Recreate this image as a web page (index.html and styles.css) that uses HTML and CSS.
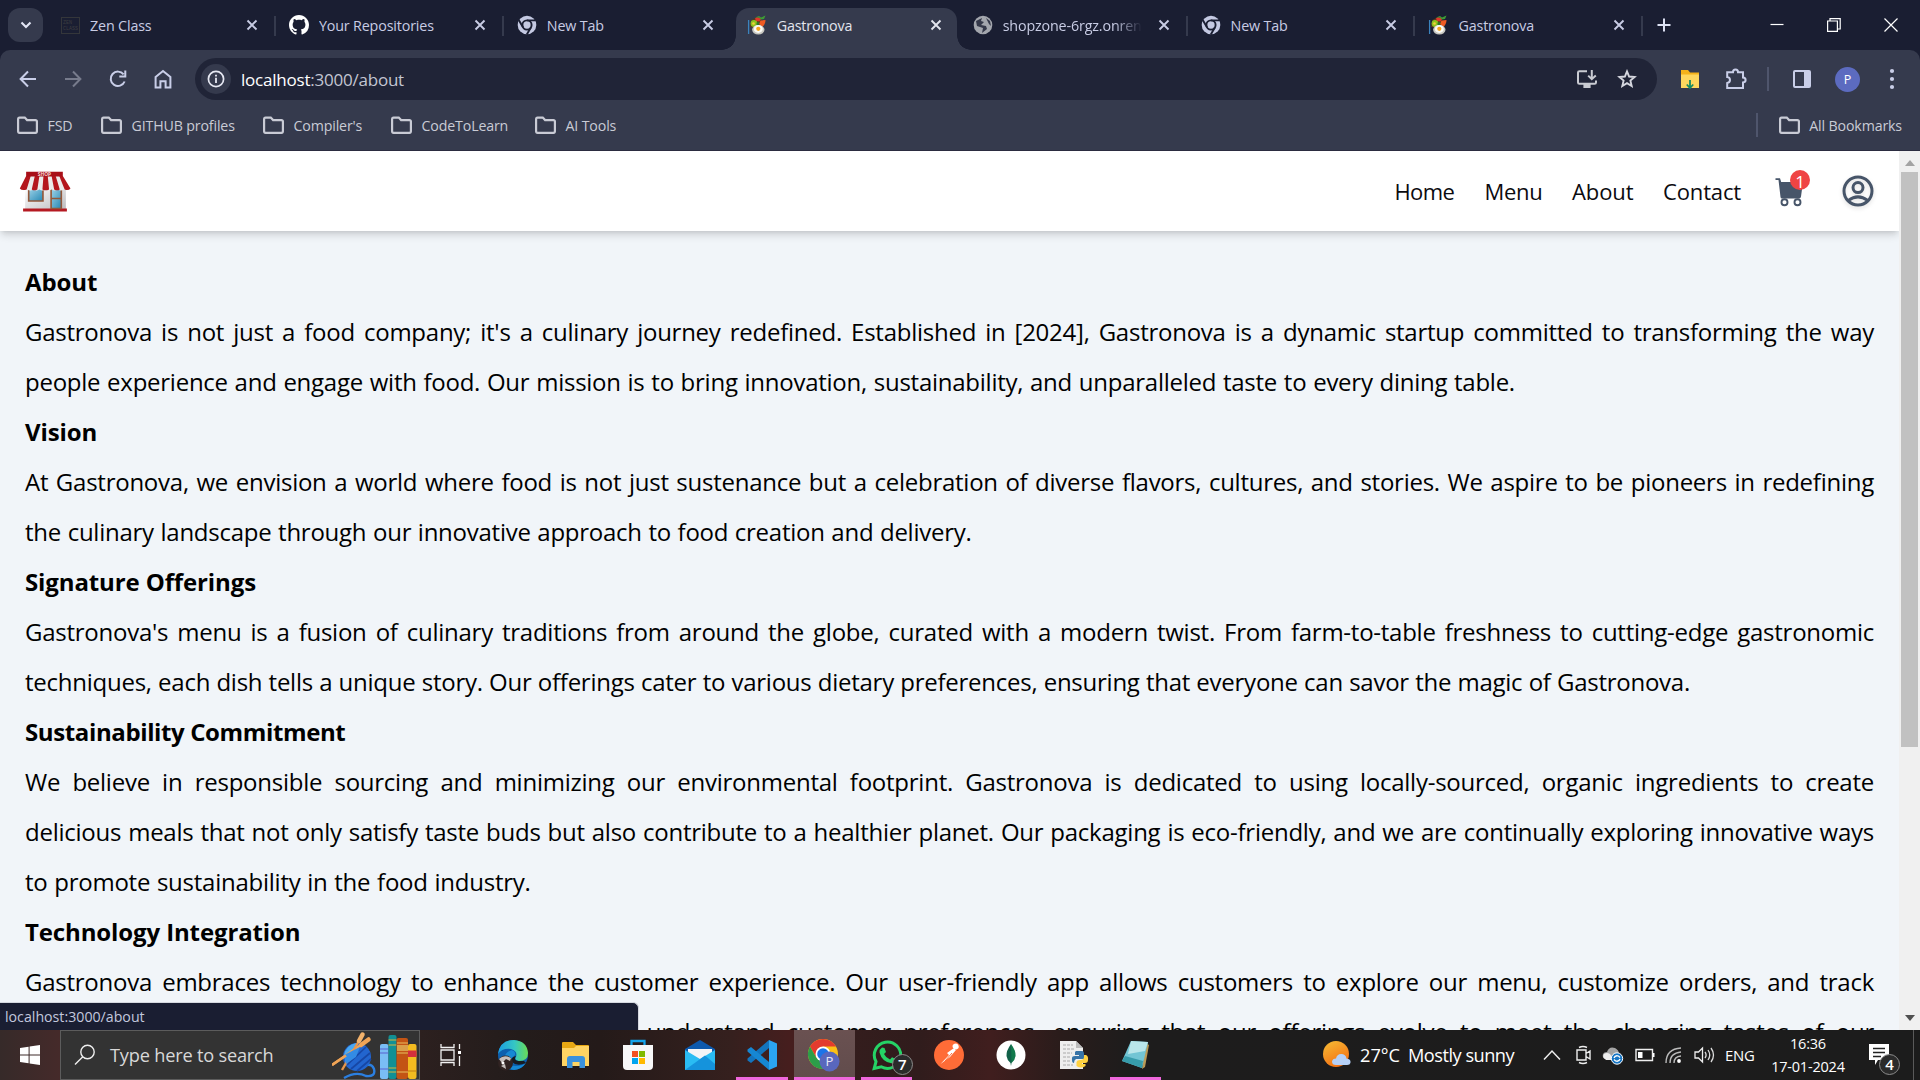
FILE: index.html
```html
<!DOCTYPE html>
<html lang="en">
<head>
<meta charset="utf-8">
<title>Gastronova</title>
<link rel="stylesheet" href="styles.css">
</head>
<body>
<svg class="defs" width="0" height="0">
  <defs>
    <symbol id="folder" viewBox="0 0 22 20"><path d="M2 4.2V15.6Q2 17 3.4 17H18.6Q20 17 20 15.6V6.2Q20 4.8 18.6 4.8H10.6L8.4 2.4H3.4Q2 2.4 2 4.2Z" fill="none" stroke="currentColor" stroke-width="2.1"/></symbol>
    <symbol id="close" viewBox="0 0 12 12"><path d="M1.5 1.5 10.5 10.5M10.5 1.5 1.5 10.5" fill="none" stroke="currentColor" stroke-width="1.9"/></symbol>
    <symbol id="chrome-grey" viewBox="0 0 20 20"><circle cx="10" cy="10" r="9.3" fill="#c4c9e2"/><circle cx="10" cy="10" r="4.6" fill="none" stroke="#1a1e32" stroke-width="1.9"/><path d="M10 5.4H18.3M6 12.3 1.9 5.2M14 12.3 9.8 19.4" stroke="#1a1e32" stroke-width="1.9"/></symbol>
    <symbol id="food" viewBox="0 0 20 20"><path d="M1.6 5V19" stroke="#3b83bd" stroke-width="1.3"/><path d="M3 12 4.500 5 9 2.500 14 3 14 10 8 13Z" fill="#5b3a1c"/><circle cx="7" cy="8.500" r="3.400" fill="#8fc31f"/><circle cx="6.500" cy="8.500" r="1.300" fill="#f4d03a"/><path d="M8 3.500Q11 1 14 4L12.500 6.500 9 6Z" fill="#e0352b"/><path d="M8 2.500 12 1 14 2.500 18.500 .5 17 4 14 4.500 12 2.500Z" fill="#3f9a35"/><path d="M13.500 5.500 18.500 5Q18.500 9.500 15 12L12 9Z" fill="#ef5a22"/><path d="M9.500 7.500 12.500 7 12 10 9.500 10Z" fill="#2f7a29"/><ellipse cx="11.300" cy="14.800" rx="6.200" ry="4.800" fill="#c9c8c2"/><ellipse cx="11.300" cy="14" rx="4.500" ry="3.900" fill="#fbfaf5"/><circle cx="11.300" cy="13.800" r="2.100" fill="#f5a51c"/></symbol>
  </defs>
</svg>
<div class="screen">
  <div class="tabstrip">
    <button class="tab-search"><svg width="12" height="8" viewBox="0 0 12 8"><path d="M1.5 1.5 6 6 10.5 1.5" fill="none" stroke="#e3e6f5" stroke-width="2.1"/></svg></button>
    <div class="tabs">
      <div class="tab"><span class="zen">ZEN<br>CLASS</span><span class="name">Zen Class</span><svg class="x"><use href="#close"/></svg></div>
      <div class="tab"><svg class="fav" viewBox="0 0 16 16"><path fill="#fff" d="M8 0C3.58 0 0 3.58 0 8c0 3.54 2.29 6.53 5.47 7.59.4.07.55-.17.55-.38 0-.19-.01-.82-.01-1.49-2.01.37-2.53-.49-2.69-.94-.09-.23-.48-.94-.82-1.13-.28-.15-.68-.52-.01-.53.63-.01 1.08.58 1.23.82.72 1.21 1.87.87 2.33.66.07-.52.28-.87.51-1.07-1.78-.2-3.64-.89-3.64-3.95 0-.87.31-1.59.82-2.15-.08-.2-.36-1.02.08-2.12 0 0 .67-.21 2.2.82.64-.18 1.32-.27 2-.27s1.36.09 2 .27c1.53-1.04 2.2-.82 2.2-.82.44 1.1.16 1.92.08 2.12.51.56.82 1.27.82 2.15 0 3.07-1.87 3.75-3.65 3.95.29.25.54.73.54 1.48 0 1.07-.01 1.93-.01 2.2 0 .21.15.46.55.38A8 8 0 0 0 16 8c0-4.42-3.58-8-8-8Z"/></svg><span class="name">Your Repositories</span><svg class="x"><use href="#close"/></svg></div>
      <div class="tab plain"><svg class="fav"><use href="#chrome-grey"/></svg><span class="name">New Tab</span><svg class="x"><use href="#close"/></svg></div>
      <div class="tab active"><svg class="fav"><use href="#food"/></svg><span class="name">Gastronova</span><svg class="x"><use href="#close"/></svg></div>
      <div class="tab"><svg class="fav" viewBox="0 0 20 20"><circle cx="10" cy="10" r="9.3" fill="#a3a6ad"/><path d="M3 6 9 3 8 6 11 7 8 10 13 11 14 14 9 18 10 13 4 11ZM13 3 17 6 18 11 16 9Z" fill="#343849"/></svg><span class="name fade">shopzone-6rgz.onrender</span><svg class="x"><use href="#close"/></svg></div>
      <div class="tab"><svg class="fav"><use href="#chrome-grey"/></svg><span class="name">New Tab</span><svg class="x"><use href="#close"/></svg></div>
      <div class="tab"><svg class="fav"><use href="#food"/></svg><span class="name">Gastronova</span><svg class="x"><use href="#close"/></svg></div>
    </div>
    <svg class="plus" width="14" height="14"><path d="M7 .5V13.5M.5 7H13.5" stroke="#dde1f3" stroke-width="2"/></svg>
    <div class="winctl">
      <svg width="14" height="14"><path d="M.5 6.500H13.5" stroke="#fff" stroke-width="1.2"/></svg>
      <svg width="14" height="14"><path d="M.6 3H10.4V13.4H.6ZM3 3V.6H13.2V11H10.4" fill="none" stroke="#fff" stroke-width="1.2"/></svg>
      <svg width="14" height="14"><path d="M.5 .5 13.5 13.5M13.5 .5 .5 13.5" stroke="#fff" stroke-width="1.2"/></svg>
    </div>
  </div>

  <div class="chrome">
    <div class="toolbar">
      <div class="navbtns">
        <svg width="20" height="20"><path d="M18 10H3M10 2.5 2.6 10 10 17.5" fill="none" stroke="#c9cee8" stroke-width="2"/></svg>
        <svg width="20" height="20"><path d="M2 10H17M10 2.5 17.4 10 10 17.5" fill="none" stroke="#777b8c" stroke-width="2"/></svg>
        <svg width="20" height="20"><path d="M16.6 12.5A7.2 7.2 0 1 1 15.6 5.4M17.3 1.6V7.6H11.3" fill="none" stroke="#c9cee8" stroke-width="2"/></svg>
        <svg width="20" height="20"><path d="M2.6 8 10 2 17.4 8V18.4H12.6V12.2H7.4V18.4H2.6Z" fill="none" stroke="#c9cee8" stroke-width="2"/></svg>
      </div>
      <div class="omnibox">
        <span class="info"><svg width="18" height="18"><circle cx="9" cy="9" r="7.6" fill="none" stroke="#e6e8f2" stroke-width="1.7"/><path d="M9 7.8V13M9 4.7V6.5" stroke="#e6e8f2" stroke-width="1.8"/></svg></span>
        <span class="url"><b>localhost</b>:3000/about</span>
        <svg width="22" height="20"><path d="M11 2.2H3.4Q2 2.2 2 3.6V13.4Q2 14.8 3.4 14.8H18.6Q20 14.8 20 13.4V11.6M15.8 1V10M12.2 6.6 15.8 10.2 19.8 6.6" fill="none" stroke="#c9cbd2" stroke-width="2"/><path d="M7.4 15H14.6V19H7.4Z" fill="#c9cbd2"/></svg>
        <svg width="20" height="20"><path d="M10 2.4 12.1 7.5 17.6 8 13.4 11.6 14.7 17 10 14.1 5.3 17 6.6 11.6 2.4 8 7.9 7.5Z" fill="none" stroke="#d5d7df" stroke-width="1.9"/></svg>
      </div>
      <div class="exts">
        <svg width="20" height="20"><path d="M1 1H8L10 3.5H19V18.5H1Z" fill="#f5b21b"/><path d="M1 5.5H19V19H1Z" fill="#ffd75e"/><path d="M10 11V18.5M6.8 15.5 10 19 13.2 15.5" fill="none" stroke="#178a62" stroke-width="1.8"/></svg>
        <svg width="22" height="22"><path d="M2.2 4.2H8Q8 1.6 10.5 1.6 13 1.6 13 4.2H18V9.6Q20.6 9.8 20.6 12 20.6 14.2 18 14.4V20H2.2V15Q5 14.6 5 12 5 9.5 2.2 9.1Z" fill="none" stroke="#c9cee8" stroke-width="2"/></svg>
        <i class="bar"></i>
        <svg width="20" height="20"><rect x="2" y="2" width="16" height="16" rx="1" fill="none" stroke="#c9cee8" stroke-width="2"/><path d="M12 2H18V18H12Z" fill="#c9cee8"/></svg>
        <span class="avatar">P</span>
        <svg width="6" height="22"><g fill="#c9cee8"><circle cx="3" cy="3" r="2.1"/><circle cx="3" cy="11" r="2.1"/><circle cx="3" cy="19" r="2.1"/></g></svg>
      </div>
    </div>
    <div class="bookmarks">
      <span class="bm w1"><svg><use href="#folder"/></svg>FSD</span>
      <span class="bm w2"><svg><use href="#folder"/></svg>GITHUB profiles</span>
      <span class="bm w3"><svg><use href="#folder"/></svg>Compiler's</span>
      <span class="bm w4"><svg><use href="#folder"/></svg>CodeToLearn</span>
      <span class="bm"><svg><use href="#folder"/></svg>AI Tools</span>
      <i class="bar"></i>
      <span class="bm all"><svg><use href="#folder"/></svg>All Bookmarks</span>
    </div>
  </div>

  <div class="viewport">
    <div class="page">
      <header class="site-header">
        <svg class="logo" width="53" height="42" viewBox="0 0 52 42" preserveAspectRatio="none">
          <defs>
            <linearGradient id="wall" x1="0" x2="1" y1="0" y2="1"><stop offset="0" stop-color="#fff"/><stop offset="1" stop-color="#bdbdc0"/></linearGradient>
            <linearGradient id="glass" x1="0" x2="1" y1="0" y2="1"><stop offset="0" stop-color="#9fd3e8"/><stop offset="1" stop-color="#2688b4"/></linearGradient>
          </defs>
          <path d="M6 17H46V38H6Z" fill="url(#wall)"/>
          <path d="M4 37.5H47V40.5H4Z" fill="#b51a22"/>
          <path d="M9.5 17.5H23.5V30H9.5Z" fill="url(#glass)" stroke="#93583a" stroke-width="1.6"/>
          <path d="M31.5 18H41.5V37.5H31.5ZM31.5 27.5H41.5" fill="url(#glass)" stroke="#93583a" stroke-width="1.6"/>
          <path d="M7 5H43L50.5 17.5Q48 20.5 44 18.5 41 20.5 38 18.5 35 20.5 32 18.5 29 20.5 26 18.5 23 20.5 20 18.5 17 20.5 14 18.5 11 20.5 8 18.5 3 20.5 .8 17.5Z" fill="#ebebeb"/>
          <path d="M7 5H11.5L7.5 18.5Q3 20 .8 17.5ZM15.5 5H20L18 18.5Q15 20.2 12.5 18.5ZM24 5H28.2L29.5 18.5Q26 20.2 23 18.5ZM32 5H36L40 18.5Q37.5 20.2 34.5 18.5ZM39.5 5H43L50.5 17.5Q48.5 20 44.8 18.5Z" fill="#b4161d"/>
          <path d="M7 .8H43V5.6H7Z" fill="#a80f18"/>
          <text x="25" y="4.9" text-anchor="middle" font-size="4.8" font-weight="700" fill="#f5d9d9">SHOP</text>
        </svg>
        <nav><a class="n1">Home</a><a class="n2">Menu</a><a class="n3">About</a><a class="n4">Contact</a></nav>
        <span class="cart"><svg width="30" height="30" viewBox="0 0 30 30"><path d="M.5 1.2H5L6.2 5H28L26 19.6Q25.8 21.5 24 21.5H7Q5.7 21.5 5.5 20L3.5 3H.5Z" fill="#475569"/><circle cx="9.5" cy="25.2" r="3" fill="#fff" stroke="#475569" stroke-width="1.9"/><circle cx="22.5" cy="25.2" r="3" fill="#fff" stroke="#475569" stroke-width="1.9"/></svg><span class="badge">1</span></span>
        <svg class="user" width="32" height="32" viewBox="0 0 32 32"><g fill="none" stroke="#475569" stroke-width="3"><circle cx="16" cy="16" r="14"/><circle cx="16" cy="12.6" r="5"/><path d="M6.4 25.4Q16 18.4 25.6 25.4"/></g></svg>
      </header>
      <main>
        <h2>About</h2>
        <p><span>Gastronova is not just a food company; it's a culinary journey redefined. Established in [2024], Gastronova is a dynamic startup committed to transforming the way</span> <span class="end e1">people experience and engage with food. Our mission is to bring innovation, sustainability, and unparalleled taste to every dining table.</span></p>
        <h2>Vision</h2>
        <p><span>At Gastronova, we envision a world where food is not just sustenance but a celebration of diverse flavors, cultures, and stories. We aspire to be pioneers in redefining</span> <span class="end e2">the culinary landscape through our innovative approach to food creation and delivery.</span></p>
        <h2>Signature Offerings</h2>
        <p><span>Gastronova's menu is a fusion of culinary traditions from around the globe, curated with a modern twist. From farm-to-table freshness to cutting-edge gastronomic</span> <span class="end e3">techniques, each dish tells a unique story. Our offerings cater to various dietary preferences, ensuring that everyone can savor the magic of Gastronova.</span></p>
        <h2 class="tight">Sustainability Commitment</h2>
        <p><span>We believe in responsible sourcing and minimizing our environmental footprint. Gastronova is dedicated to using locally-sourced, organic ingredients to create</span> <span>delicious meals that not only satisfy taste buds but also contribute to a healthier planet. Our packaging is eco-friendly, and we are continually exploring innovative ways</span> <span class="end e4">to promote sustainability in the food industry.</span></p>
        <h2>Technology Integration</h2>
        <p><span>Gastronova embraces technology to enhance the customer experience. Our user-friendly app allows customers to explore our menu, customize orders, and track</span> <span>deliveries in real-time. We leverage data analytics to understand customer preferences, ensuring that our offerings evolve to meet the changing tastes of our</span></p>
      </main>
    </div>
    <div class="scrollbar">
      <svg width="10" height="6"><path d="M0 6 5 0 10 6Z" fill="#a3a3a3"/></svg>
      <div class="thumb"></div>
      <svg class="down" width="10" height="6"><path d="M0 0 5 6 10 0Z" fill="#505050"/></svg>
    </div>
    <div class="status">localhost:3000/about</div>
  </div>

  <div class="taskbar">
    <div class="start"><svg width="20" height="20"><path d="M0 3 8.6 1.7V9.5H0ZM9.6 1.5 20 0V9.5H9.6ZM0 10.5H8.6V18.3L0 17ZM9.6 10.5H20V20L9.6 18.5Z" fill="#fff"/></svg></div>
    <div class="search">
      <svg width="22" height="22"><circle cx="13.5" cy="8" r="6.7" fill="none" stroke="#eee" stroke-width="1.4"/><path d="M8.8 12.8 1 20.6" stroke="#eee" stroke-width="1.4"/></svg>
      <span>Type here to search</span>
      <svg class="art" width="88" height="48" viewBox="0 0 88 48">
        <path d="M12 47Q24 40 34 45 44 46 42 38 40 33 35 34" fill="none" stroke="#2b7fe0" stroke-width="2.4"/>
        <circle cx="25" cy="26" r="14" fill="#2265cf"/>
        <path d="M12 24Q14 14 24 12L26 20Q18 22 14 32Z" fill="#49a8f2"/>
        <path d="M15 34 34 16M19 38 38 22M25 40 39 28" stroke="#1747a5" stroke-width="1.7"/>
        <path d="M0 34 36 9" stroke="#f0a456" stroke-width="2.6"/><path d="M29 14 36.5 8.5" stroke="#f0a456" stroke-width="4.5" stroke-linecap="round"/>
        <path d="M10 39 31 3" stroke="#e8964a" stroke-width="2.4"/><path d="M27 10 30.5 3.5" stroke="#f2b26b" stroke-width="4.5" stroke-linecap="round"/>
        <path d="M12 24 28 16 24 26 14 33Z" fill="#338be5"/>
        <path d="M0 34 14 24.500" stroke="#f0a456" stroke-width="2.6"/>
        <rect x="48" y="13" width="8.5" height="35" rx="2" fill="#79bdf5"/><path d="M48 18H56.5M48 38H56.5M48 22H56.5" stroke="#5b63cf" stroke-width="1.2"/>
        <rect x="56.5" y="4" width="8" height="44" rx="2" fill="#119095"/><path d="M56.5 9H64.5M56.5 14H64.5M56.5 37H64.5M56.5 41H64.5" stroke="#d1b543" stroke-width="1.1"/>
        <rect x="64.5" y="7" width="11.5" height="41" rx="2" fill="#c35414"/><path d="M65 14H76V20H65Z" fill="#d9a04b"/><path d="M65 12H76M65 22H76M65 41H76" stroke="#e8bf60" stroke-width="1"/>
        <rect x="76" y="13" width="8.5" height="35" rx="2" fill="#f2bb20"/><path d="M76 19.500H84.500V26H76Z" fill="#d32f3c"/><path d="M76 40H84.500" stroke="#c07d14" stroke-width="1"/>
      </svg>
    </div>
    <div class="apps">
      <div class="app"><svg width="22" height="22"><path d="M1 0V3.500H14V0M1 22V18.500H14V22M1 6H14V16H1ZM19.500 0V5M19.500 12V22" fill="none" stroke="#f2f2f2" stroke-width="1.3"/><path d="M18 7H21V10H18Z" fill="#fff"/></svg></div>
      <div class="app"><svg width="32" height="32" viewBox="0 0 32 32"><defs><linearGradient id="edge" x2="1"><stop offset="0" stop-color="#1b9de2"/><stop offset=".55" stop-color="#35c6c4"/><stop offset="1" stop-color="#6ade55"/></linearGradient></defs><circle cx="16" cy="16" r="15" fill="#0c5fae"/><path d="M1 15Q3 1 17 1 30 2 31 14 31 22 22 22 17 21 19 18 21 12 14 10 5 9 1 15Z" fill="url(#edge)"/><path d="M11 17Q9 27 19 27 25 27 29 24 24 31 17 31 9 30 7 22 6 15 14 11 19 12 18 16 16 17 17 20L20 22 14 23Z" fill="#1688d4"/><path d="M19 17Q16 21 21 22H27L29 24Q20 28 15 23 13 18 19 17Z" fill="#171b22"/><circle cx="8.500" cy="24" r="7.500" fill="#302322"/><path d="M2 20Q7 15 14 19L13 22 9 20 5 24ZM4 27 8 25 9 30Z" fill="#c4bebc"/><circle cx="6" cy="24" r="1.500" fill="#fff"/></svg></div>
      <div class="app"><svg width="30" height="28" viewBox="0 0 30 28"><path d="M1 2Q1 1 2 1H12L15 4H27Q28 4 28 5V24H1Z" fill="#e8a813"/><path d="M1 7H13L15 5H28V25H1Z" fill="#ffd463"/><path d="M6 27V18Q6 15 9 15H21Q24 15 24 18V27H18.500V21H11.500V27Z" fill="#3a91dc"/></svg></div>
      <div class="app"><svg width="30" height="32" viewBox="0 0 30 32"><path d="M8.500 7V2H21.500V7" fill="none" stroke="#15a3ea" stroke-width="2.300"/><path d="M0 6H30V27Q30 31 26 31H4Q0 31 0 27Z" fill="#f7f7f8"/><path d="M9 12H15V18H9Z" fill="#f25022"/><path d="M16 12H22V18H16Z" fill="#7fba00"/><path d="M9 19H15V25H9Z" fill="#00a4ef"/><path d="M16 19H22V25H16Z" fill="#ffb900"/></svg></div>
      <div class="app"><svg width="30" height="30" viewBox="0 0 30 30"><path d="M0 9 15 0 30 9V18H0Z" fill="#0c59ad"/><path d="M3 9H27V20H3Z" fill="#f3f4f6"/><path d="M0 10 15 19 30 10V30H0Z" fill="#2abcf3"/><path d="M0 30 20 15.500 30 24V30Z" fill="#1593dc"/></svg></div>
      <div class="app on"><svg width="30" height="30" viewBox="0 0 30 30"><path d="M22 0 30 3.500V26.500L22 30Z" fill="#2ba4f2"/><path d="M22 0V8L4 23 .5 20.500V18.500Z" fill="#1374bd"/><path d="M22 30V22L4 7 .5 9.500V11.500Z" fill="#1687d3"/></svg></div>
      <div class="app on current"><svg width="34" height="34" viewBox="0 0 34 34"><circle cx="16" cy="16" r="15" fill="#fbc116"/><path d="M3 8.500A15 15 0 0 1 29 8.500H16L9.500 20Z" fill="#e33b2e"/><path d="M3 8.500 9.500 20 16 23.500H22.500L16 31A15 15 0 0 1 3 8.500Z" fill="#2c9e49"/><circle cx="16" cy="16" r="7.500" fill="#fff"/><circle cx="16" cy="16" r="5.800" fill="#1c73e8"/><circle cx="22.500" cy="23.500" r="10" fill="#5967bd"/><text x="22.500" y="28.300" text-anchor="middle" font-size="13" fill="#e6e6f5">P</text></svg></div>
      <div class="app on"><svg width="30" height="31" viewBox="0 0 30 31"><path d="M2.200 28.500 4 21.600A13.200 13.200 0 1 1 9.300 26.800Z" fill="none" stroke="#25d366" stroke-width="3"/><path d="M10 7.500 12.500 8 14 12 12 14Q14 18 18 19.500L20 17.300 23.800 19Q24 23 19.500 23.300 10 22 7.500 12.500 7.500 9 10 7.500Z" fill="#25d366"/></svg><span class="count">7</span></div>
      <div class="app"><svg width="30" height="30" viewBox="0 0 30 30"><circle cx="15" cy="15" r="15" fill="#ff6c37"/><path d="M6.500 24 15 15 13 13 20 8 22 10 16 17ZM19 8A3 3 0 1 1 22.500 9.500Z" fill="#fff"/><path d="M11 21 18 13" stroke="#ff6c37"/></svg></div>
      <div class="app"><svg width="30" height="30" viewBox="0 0 30 30"><circle cx="15" cy="15" r="14.500" fill="#fff"/><path d="M15 4Q20 11 19.500 16 19 20 15.500 23L15 26 14.500 23Q11 20 10.500 16 10 11 15 4Z" fill="#116149"/><path d="M15 4Q20 11 19.500 16 19 20 15.500 23Z" fill="#13aa52" opacity=".35"/></svg></div>
      <div class="app"><svg width="30" height="30" viewBox="0 0 30 30"><path d="M1 1H17L24 8V29H1Z" fill="#eee"/><path d="M17 1V8H24Z" fill="#bbb"/><path d="M4 5H14M4 9H15M4 13H13M4 17H12M4 21H12M4 25H14" stroke="#aaa" stroke-dasharray="3 1"/><path d="M17 11H23Q25 11 25 14V19H17Q15 20 15 23 12.500 23 13 18 13 16 16 16H20V15H16V12Z" fill="#3774a8"/><path d="M25 15H27Q29.500 16 29 20 29 23 26 23H23V24H26.500V26Q22 29 17.500 26V22Q18 20 21 20 25 20 25 17Z" fill="#ffd140"/></svg></div>
      <div class="app on"><svg width="30" height="30" viewBox="0 0 30 30"><path d="M25 3 28 5 24 27 21 29Z" fill="#b99a57"/><path d="M10 1 27 2 21 28 1 21Z" fill="#72c5d4"/><path d="M10 1 27 2 24 11 7 14Z" fill="#b9e6ea"/><path d="M4 16 22 21 21 28 1 21Z" fill="#379cab"/></svg></div>
    </div>
    <div class="weather">
      <svg width="30" height="32" viewBox="0 0 30 32"><defs><linearGradient id="sun" x1="0" y1="0" x2=".5" y2="1"><stop offset="0" stop-color="#f7bd35"/><stop offset="1" stop-color="#f47315"/></linearGradient></defs><circle cx="14" cy="15" r="13" fill="url(#sun)"/><path d="M14 26Q10 26 10 22.500 10.500 19.500 14 19.500 15 14.500 20 15 24 15.500 24.500 19.500 29 20 28.500 23.500 28 26 25 26Z" fill="#b5d0f7"/></svg>
      <span class="temp">27°C</span><span class="cond">Mostly sunny</span>
    </div>
    <div class="tray">
      <svg width="18" height="12"><path d="M1 10.500 9 2 17 10.500" fill="none" stroke="#eee" stroke-width="1.500"/></svg>
      <svg width="16" height="20"><path d="M1 5H10V15H1ZM10 8.500 14 6V14L10 11.500M3 2.500Q7 .5 11 2.500M3 17.500Q7 19.500 11 17.500" fill="none" stroke="#eee" stroke-width="1.400"/></svg>
      <svg width="22" height="20"><path d="M3 14Q0 13 1 9 2 7 5 7 7 1 13 3 17 5 17 9L19 13 14 15Z" fill="#a4a4a4"/><path d="M3 14Q0 12 2 9 5 7 8 9L12 15H4Z" fill="#eee"/><circle cx="15" cy="13.500" r="5.700" fill="#1675c4" stroke="#fff"/><path d="M12 13Q13 10 16.500 11L18 12.500M18 14Q17 17 13.500 16L12 14.500" fill="none" stroke="#fff" stroke-width="1.300"/></svg>
      <svg width="20" height="14"><path d="M1 1.500H17.500V12.500H1Z" fill="none" stroke="#eee" stroke-width="1.400"/><path d="M3 4H7.500V10H3ZM18 5H19.500V9H18Z" fill="#fff"/></svg>
      <svg width="18" height="18"><g fill="none" stroke="#bbb" stroke-width="1.400"><path d="M1 17Q1 3 16 2M5 17Q5 7 16 6M9 17Q9 10.500 16 10"/></g><circle cx="14" cy="15" r="1.900" fill="#fff"/></svg>
      <svg width="22" height="18"><path d="M1 6H4.500L8.500 2V16L4.500 12H1Z" fill="none" stroke="#eee" stroke-width="1.300"/><path d="M11 6Q13.200 9 11 12M14 4Q17.500 9 14 14M17 2Q22 9 17 16" fill="none" stroke="#ddd" stroke-width="1.300"/></svg>
    </div>
    <div class="lang">ENG</div>
    <div class="clock"><span>16:36</span><span class="date">17-01-2024</span></div>
    <div class="notif"><svg width="20" height="22"><path d="M0 0H20V16H9L6 21V16H0Z" fill="#fff"/><path d="M4 4.500H16M4 8.500H16M4 12.500H12" stroke="#222" stroke-width="1.500"/></svg><span class="count">4</span></div>
    <i class="peek"></i>
  </div>
</div>
</body>
</html>
```
FILE: styles.css
```css
* { box-sizing: border-box; }
body { margin: 0; font-family: "Open Sans", "Noto Sans", sans-serif; }
svg { flex: none; display: block; }
.defs { position: absolute; }
.screen { width: 1920px; height: 1080px; overflow: hidden; display: flex; flex-direction: column; background: #1a1e32; }

/* tab strip */
.tabstrip { height: 50px; display: flex; align-items: center; padding-left: 8px; color: #c8cce4; }
.tab-search { width: 35px; height: 34px; border: 0; border-radius: 12px; background: #353a4d; padding: 0; display: flex; align-items: center; justify-content: center; }
.tabs { display: flex; align-self: flex-end; margin-left: 5px; }
.tab { width: 227.900px; height: 42px; padding: 0 18px 8px 13px; display: flex; align-items: center; position: relative; }
.tab::after { content: ""; position: absolute; right: 0; top: 8px; width: 2px; height: 20px; background: #353a4d; }
.tab.plain::after, .tab.active::after { display: none; }
.tab.active { background: #353a4d; border-radius: 13px 13px 0 0; margin-left: 4px; width: 221px; padding: 0 15px 8px 11px; margin-right: 3px; color: #e3e5ee; }
.tab.active::before { content: ""; position: absolute; left: -14px; right: -14px; bottom: 0; height: 14px; background: radial-gradient(circle at 0 0, transparent 13.500px, #353a4d 14px) left / 14px 14px no-repeat, radial-gradient(circle at 100% 0, transparent 13.500px, #353a4d 14px) right / 14px 14px no-repeat; }
.fav { width: 20px; height: 20px; }
.zen { width: 19px; height: 17px; border: 1px solid #34363a; font: 5px/6px "Liberation Mono", monospace; color: #3c3d40; padding: 2px 1px; overflow: hidden; }
.name { flex: 1; margin-left: 10px; padding-top: 2px; font-size: 14.300px; letter-spacing: -.15px; white-space: nowrap; overflow: hidden; line-height: 22px; }
.name.fade { margin-right: 16px; -webkit-mask-image: linear-gradient(90deg, #000 80%, transparent); mask-image: linear-gradient(90deg, #000 80%, transparent); }
.x { width: 12px; height: 12px; }
.plus { margin-left: 14px; }
.winctl { margin-left: auto; padding-right: 22px; display: flex; gap: 43px; }

/* toolbar and bookmarks */
.chrome { height: 101px; background: #353a4d; border-radius: 10px 10px 0 0; border-bottom: 1px solid #2b2c40; }
.toolbar { height: 58px; display: flex; align-items: center; padding-left: 18px; }
.navbtns { display: flex; gap: 25px; width: 177px; }
.omnibox { width: 1462px; height: 42px; border-radius: 21px; background: #202437; display: flex; align-items: center; padding: 0 20px 0 6px; }
.info { width: 30px; height: 30px; border-radius: 50%; background: #353a4d; display: flex; align-items: center; justify-content: center; }
.url { margin-left: 10px; margin-right: auto; font-size: 17px; color: #c3c6d2; letter-spacing: -.22px; }
.url b { font-weight: 400; color: #fff; }
.omnibox svg + svg { margin-left: 19px; }
.exts { display: flex; align-items: center; margin-left: 23px; }
.exts svg:nth-child(2) { margin-left: 25px; }
.bar { width: 2px; height: 24px; background: #4f556c; margin-left: 20px; }
.exts .bar + svg { margin-left: 23px; }
.avatar { width: 25px; height: 25px; border-radius: 50%; background: #5c6bc0; color: #fff; font-size: 12.500px; line-height: 25px; text-align: center; margin: 0 29px 0 23px; }
.bookmarks { height: 42px; display: flex; align-items: center; padding: 0 18px 8px 16px; font-size: 14.200px; color: #c9cbd5; }
.bm { display: flex; align-items: center; gap: 8.500px; white-space: nowrap; letter-spacing: -.14px; }
.bm svg { width: 23px; height: 21px; }
.w1 { width: 84px; } .w2 { width: 162px; } .w3 { width: 128px; } .w4 { width: 144px; }
.bookmarks .bar { margin: 0 20px 0 auto; }

/* web page */
.viewport { height: 879px; display: flex; position: relative; overflow: hidden; }
.page { width: 1899px; background: #f1f5f9; }
.site-header { height: 80px; background: #fff; box-shadow: 0 5px 8px -1px rgba(0,0,0,.14), 0 2px 5px -2px rgba(0,0,0,.12); display: flex; align-items: center; padding: 0 25px 0 19px; }
.logo { margin-top: 1px; }
nav { margin-left: auto; display: flex; font-size: 22px; letter-spacing: -.3px; color: #0b0b0f; }
.n1 { width: 90px; letter-spacing: -.6px; } .n2 { width: 87.500px; } .n3 { width: 91px; letter-spacing: -.1px; } .n4 { width: 112px; letter-spacing: -.15px; }
.cart { position: relative; width: 30px; margin-top: 2px; }
.badge { position: absolute; left: 15px; top: -7px; width: 20px; height: 20px; border-radius: 50%; background: #ef4444; color: #fff; font-size: 17px; line-height: 23px; text-align: center; }
.user { margin-left: 37px; margin-top: -1px; filter: drop-shadow(0 2px 2px rgba(0,0,0,.12)); }
main { padding: 26px 25px 0; font-size: 24px; line-height: 50px; color: #000; }
h2, p { margin: 0; font-size: inherit; }
h2 { font-weight: 700; letter-spacing: -.12px; }
h2.tight { letter-spacing: -.38px; }
p span { display: block; letter-spacing: -.25px; text-align: justify; text-align-last: justify; height: 50px; }
p .end { text-align-last: left; white-space: nowrap; }
.e1 { word-spacing: .8px; }
.e2 { word-spacing: .65px; }
.e3 { word-spacing: .3px; }
.e4 { word-spacing: .8px; }
.scrollbar { width: 21px; background: #f0f0f0; display: flex; flex-direction: column; align-items: center; padding: 9px 0; }
.thumb { width: 17px; height: 575px; background: #c1c1c1; margin-top: 6px; }
.down { margin-top: auto; }
.status { position: absolute; left: 0; bottom: 0; width: 639px; height: 28px; background: #1a1e32; border: solid #d5d8df; border-width: 1px 1px 0 0; border-radius: 0 6px 0 0; color: #c3c8de; font-size: 14.200px; line-height: 28px; padding-left: 5px; }

/* taskbar */
.taskbar { height: 50px; display: flex; align-items: center; color: #fff; background: linear-gradient(90deg, #362a29 0, #452a2a 60px, #2c201f 420px, #231c1b 520px, #241a19 600px, #35201e 730px, #461e1e 790px, #341d1d 850px, #301c1c 920px, #401e1e 990px, #2a1c1b 1060px, #1d1c1c 1130px, #1c1c1c); }
.start { width: 60px; display: flex; justify-content: center; }
.search { width: 360px; height: 50px; background: #333; border: 1px solid #5c5c5c; display: flex; align-items: center; padding-left: 13px; font-size: 18.200px; letter-spacing: -.2px; color: #d8d8d8; }
.search span { margin-left: 14px; }
.search .art { margin-left: auto; margin-right: -1px; }
.apps { display: flex; }
.app { width: 62.250px; height: 50px; display: flex; align-items: center; justify-content: center; position: relative; }
.app.on::after { content: ""; position: absolute; left: 5px; right: 6px; bottom: 0; height: 3px; background: #ef67dc; }
.app.current { background: linear-gradient(#6a5151, #614c4c) content-box; padding: 0 1px 0 0; }
.app.current::after { left: 0; right: 1px; }
.count { position: absolute; left: 36px; bottom: 5px; width: 21px; height: 21px; border: 1.500px solid #8b8b8b; border-radius: 50%; background: #2b2b2b; font-size: 15px; font-weight: 600; line-height: 18px; text-align: center; }
.weather { margin-left: 155px; display: flex; align-items: center; width: 221px; font-size: 18.200px; white-space: nowrap; }
.temp { width: 48px; margin-left: 8px; }
.cond { letter-spacing: -.5px; }
.tray { display: flex; align-items: center; gap: 10.600px; }
.tray svg:nth-child(2) { margin-left: 4px; }
.lang { margin-left: 9px; width: 40px; font-size: 14.900px; letter-spacing: -.2px; }
.clock { width: 86px; display: flex; flex-direction: column; align-items: center; font-size: 14.500px; line-height: 23px; letter-spacing: -.2px; }
.notif { position: relative; margin-left: 18px; }
.notif .count { left: 10px; bottom: -9px; }
.peek { margin-left: auto; width: 7px; height: 50px; border-left: 1px solid #5a5a5a; }
```
